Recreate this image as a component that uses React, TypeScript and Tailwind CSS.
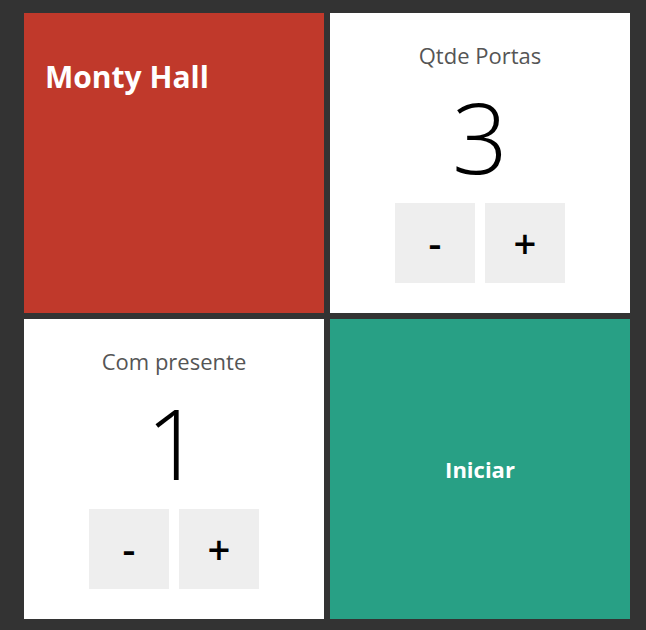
const Counter = ({ title, value }: { title: string; value: number }) => {
    return (
        <div className="flex h-[300px] w-[300px] flex-col items-center bg-white pt-[27px]">
            <div className="h-[30px] text-[22px] leading-[30px] text-[#555]">{title}</div>
            <div className="h-[133px] text-[98px] font-light leading-[133px] text-black">{value}</div>
            <div className="flex gap-[10px]">
                <button className="flex h-20 w-20 items-center justify-center bg-[#eeeeee] text-[40px] font-semibold text-black">-</button>
                <button className="flex h-20 w-20 items-center justify-center bg-[#eeeeee] text-[40px] font-semibold text-black">+</button>
            </div>
        </div>
    )
}

export default function App() {
    return (
        <div
            className="min-h-screen bg-[#333333] pl-[24px] pt-[13px]"
            style={{ fontFamily: '"Open Sans", "Noto Sans", sans-serif' }}
        >
            <div className="grid w-[606px] grid-cols-[300px_300px] gap-[6px]">
                <div className="h-[300px] w-[300px] bg-[#c0392b] pl-[21px] pt-[44px]">
                    <h1 className="text-[30px] font-bold leading-[40px] text-white">Monty Hall</h1>
                </div>
                <Counter title="Qtde Portas" value={3} />
                <Counter title="Com presente" value={1} />
                <button className="flex h-[300px] w-[300px] items-center justify-center bg-[#28a085] text-[22px] font-bold text-white">
                    Iniciar
                </button>
            </div>
        </div>
    )
}
